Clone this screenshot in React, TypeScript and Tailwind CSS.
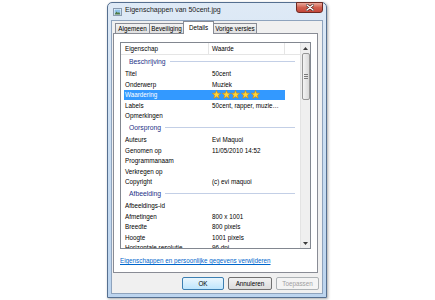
type Item = { group: string } | { name: string; value?: string; stars?: boolean; selected?: boolean };

const items: Item[] = [
  { group: "Beschrijving" },
  { name: "Titel", value: "50cent" },
  { name: "Onderwerp", value: "Muziek" },
  { name: "Waardering", stars: true, selected: true },
  { name: "Labels", value: "50cent, rapper, muziek, hiphop" },
  { name: "Opmerkingen" },
  { group: "Oorsprong" },
  { name: "Auteurs", value: "Evi Maquoi" },
  { name: "Genomen op", value: "11/05/2010 14:52" },
  { name: "Programmanaam" },
  { name: "Verkregen op" },
  { name: "Copyright", value: "(c) evi maquoi" },
  { group: "Afbeelding" },
  { name: "Afbeeldings-id" },
  { name: "Afmetingen", value: "800 x 1001" },
  { name: "Breedte", value: "800 pixels" },
  { name: "Hoogte", value: "1001 pixels" },
  { name: "Horizontale resolutie", value: "96 dpi" },
];

function Star() {
  return (
    <svg width="9" height="9" viewBox="0 0 10 10">
      <polygon
        points="5,0.4 6.3,3.5 9.6,3.7 7.1,5.9 7.9,9.3 5,7.5 2.1,9.3 2.9,5.9 0.4,3.7 3.7,3.5"
        fill="#ffd53d"
        stroke="#d98a00"
        strokeWidth="0.7"
      />
    </svg>
  );
}

function Row({ item }: { item: Item }) {
  if ("group" in item) {
    return (
      <div className="h-[13.5px] shrink-0 flex items-center pl-[8px] pr-[5px] gap-[4px]">
        <span className="text-[#1e3287] text-[6.8px]">{item.group}</span>
        <div className="flex-1 h-px bg-[#c3cfe6]" />
      </div>
    );
  }
  return (
    <div className="h-[10.5px] shrink-0 flex items-center">
      <div
        className={`flex items-center h-full ml-[3px] w-[161px] ${item.selected ? "bg-[#3399ff] text-white" : ""}`}
      >
        <div className="w-[85px] pl-[1px] whitespace-nowrap overflow-hidden">{item.name}</div>
        <div className="w-[73px] pl-[3px] whitespace-nowrap overflow-hidden text-ellipsis">
          {item.stars ? (
            <div className="flex gap-[0.7px]">
              <Star />
              <Star />
              <Star />
              <Star />
              <Star />
            </div>
          ) : (
            item.value
          )}
        </div>
      </div>
    </div>
  );
}

function Arrow({ up }: { up?: boolean }) {
  return (
    <svg width="5" height="3" viewBox="0 0 5 3">
      <polygon points={up ? "2.5,0 5,3 0,3" : "0,0 5,0 2.5,3"} fill="#3b3b3b" />
    </svg>
  );
}

export default function App() {
  return (
    <div className="w-[435px] h-[300px] bg-white overflow-hidden font-['Liberation_Sans',Arial,sans-serif] text-[6.3px] text-black">
      <div className="ml-[107px] mt-[2px] w-[220px] h-[296px] rounded-t-[5px] border border-[#556f90] bg-gradient-to-b from-[#dfeaf6] via-[#cadef2] to-[#bcd4ee] shadow-[1px_1px_3px_rgba(0,0,0,0.35)] flex flex-col">
        {/* title bar */}
        <div className="h-[17px] flex items-start">
          <svg width="9" height="8" viewBox="0 0 9 8" className="ml-[5px] mt-[5px]">
            <rect x="0.5" y="0.5" width="8" height="7" fill="#ffffff" stroke="#8a9bb0" />
            <rect x="1.5" y="1.5" width="6" height="5" fill="#8ec2ea" />
            <polygon points="1.5,6.5 3.5,3.5 5,5 6,4 7.5,6.5" fill="#4f7a45" />
          </svg>
          <span className="ml-[3px] mt-[2px] text-[7px] text-[#1b1b1b] whitespace-nowrap">
            Eigenschappen van 50cent.jpg
          </span>
          <div className="flex-1" />
          <div className="-mt-px mr-[3px] w-[27px] h-[11px] rounded-b-[3px] border border-[#6e2a22] bg-gradient-to-b from-[#e9a99c] via-[#d0604f] to-[#c5463a] flex items-center justify-center">
            <svg width="8" height="7" viewBox="0 0 8 7">
              <path d="M1 1 L7 6 M7 1 L1 6" stroke="#3a1511" strokeWidth="2.6" strokeLinecap="round" />
              <path d="M1 1 L7 6 M7 1 L1 6" stroke="#ffffff" strokeWidth="1.5" strokeLinecap="round" />
            </svg>
          </div>
        </div>

        {/* client area */}
        <div className="mx-[3px] h-[274px] border border-[#8ea3bd] bg-[#f0f0f0] flex flex-col">
          {/* tabs */}
          <div className="h-[12px] flex items-end pl-[3px]">
            <div className="w-[35px] h-[10px] border border-b-0 border-[#898c95] bg-gradient-to-b from-[#f2f2f2] to-[#e0e0e0] flex items-center justify-center">
              Algemeen
            </div>
            <div className="-ml-px w-[35px] h-[10px] border border-b-0 border-[#898c95] bg-gradient-to-b from-[#f2f2f2] to-[#e0e0e0] flex items-center justify-center">
              Beveiliging
            </div>
            <div className="-ml-px w-[31px] h-[13px] -mb-px relative z-10 border border-b-0 border-[#898c95] bg-white flex items-center justify-center">
              Details
            </div>
            <div className="-ml-px w-[44px] h-[10px] border border-b-0 border-[#898c95] bg-gradient-to-b from-[#f2f2f2] to-[#e0e0e0] flex items-center justify-center">
              Vorige versies
            </div>
          </div>

          {/* tab panel */}
          <div className="ml-[1px] mr-[4px] h-[240px] border border-[#898c95] bg-white flex flex-col">
            <div className="mt-[8px] mx-[6px] h-[207px] border border-[#828790] flex">
              <div className="flex-1 flex flex-col overflow-hidden">
                {/* header */}
                <div className="h-[12px] shrink-0 flex items-center border-b border-[#e5e5e5]">
                  <div className="w-[88px] h-full pl-[4px] flex items-center border-r border-[#e5e5e5]">Eigenschap</div>
                  <div className="w-[76px] h-full pl-[3px] flex items-center border-r border-[#e5e5e5]">Waarde</div>
                  <div className="flex-1" />
                </div>
                {items.map((it, i) => (
                  <Row key={i} item={it} />
                ))}
              </div>
              {/* scrollbar */}
              <div className="w-[10px] bg-[#efefef] border-l border-[#e3e3e3] flex flex-col items-center">
                <div className="h-[10px] flex items-center justify-center">
                  <Arrow up />
                </div>
                <div className="w-[8px] h-[47px] rounded-[2px] border border-[#979797] bg-gradient-to-r from-[#f4f4f4] to-[#dadada] flex flex-col items-center justify-center gap-[1px]">
                  <div className="w-[4px] h-px bg-[#7a7a7a]" />
                  <div className="w-[4px] h-px bg-[#7a7a7a]" />
                  <div className="w-[4px] h-px bg-[#7a7a7a]" />
                </div>
                <div className="flex-1" />
                <div className="h-[10px] flex items-center justify-center">
                  <Arrow />
                </div>
              </div>
            </div>
            <div className="mt-[7px] ml-[6px] text-[#0066cc] underline whitespace-nowrap">
              Eigenschappen en persoonlijke gegevens verwijderen
            </div>
          </div>

          {/* buttons */}
          <div className="mt-[4px] flex justify-end gap-[4px] pr-[3px]">
            <div className="w-[42px] h-[13px] rounded-[2px] border border-[#3c7fb1] bg-gradient-to-b from-[#eaf6fd] to-[#bee6fd] flex items-center justify-center">
              OK
            </div>
            <div className="w-[44px] h-[13px] rounded-[2px] border border-[#707070] bg-gradient-to-b from-[#f2f2f2] to-[#dcdcdc] flex items-center justify-center">
              Annuleren
            </div>
            <div className="w-[43px] h-[13px] rounded-[2px] border border-[#adb2b5] bg-[#f4f4f4] text-[#a0a0a0] flex items-center justify-center">
              Toepassen
            </div>
          </div>
        </div>
      </div>
    </div>
  );
}
